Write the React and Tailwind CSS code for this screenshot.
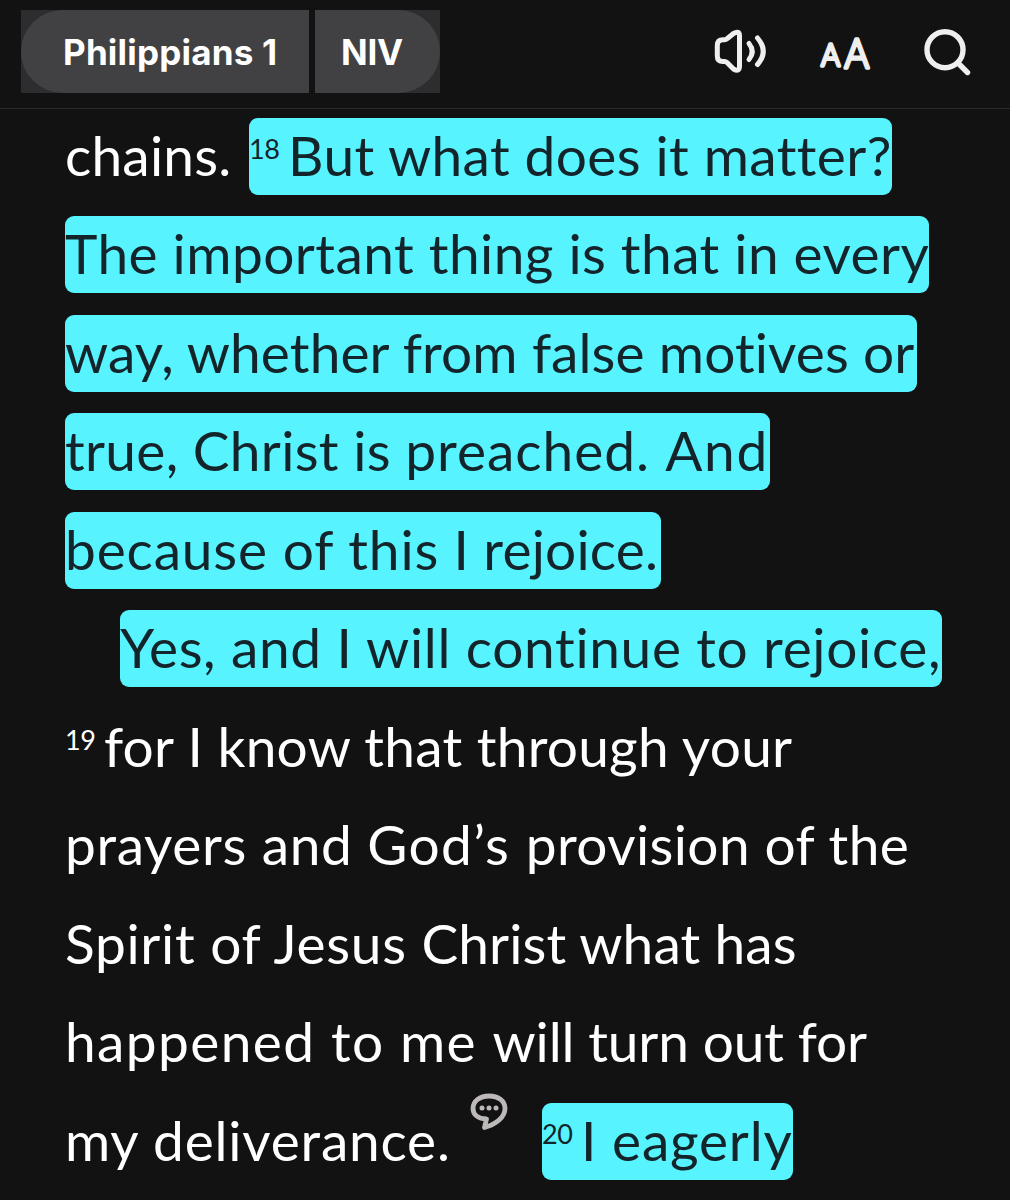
function SpeakerIcon() {
  return (
    <svg width="56" height="48" viewBox="0 0 56 48" fill="none" stroke="#efefef" strokeWidth="5" strokeLinecap="round" strokeLinejoin="round">
      <path d="M3.300 17.500Q3.300 11.800 9 11.800H10.500Q12 11.800 13 10.800L19.500 5.500Q25.500 2 25.500 8V38Q25.500 44.500 19.500 41L13 34.500Q12 33.500 10.500 33.500H9Q3.300 33.500 3.300 28Z" />
      <path d="M35 15.500Q41.500 23.500 35 31.500" />
      <path d="M43.500 10Q55 23.500 43.500 36.500" />
    </svg>
  );
}

function TextSizeIcon() {
  return (
    <svg
      width="60"
      height="60"
      viewBox="0 0 60 60"
      className="font-['Lato'] font-light"
      fill="#efefef"
      stroke="#efefef"
      strokeWidth="3.6"
      strokeLinejoin="round"
    >
      <text transform="translate(4.300 43.500) scale(0.920 1)" fontSize="31">A</text>
      <text transform="translate(27.600 46.200) scale(0.900 1)" fontSize="41.500">A</text>
    </svg>
  );
}

function SearchIcon() {
  return (
    <svg width="48" height="48" viewBox="0 0 48 48" fill="none" stroke="#efefef" strokeWidth="5.400" strokeLinecap="round">
      <circle cx="21" cy="21.700" r="18" />
      <path d="M34.500 35.500L43.500 44.500" />
    </svg>
  );
}

function NoteIcon() {
  return (
    <svg width="38" height="38" viewBox="0 0 38 38" fill="none">
      <path
        d="M16.500 26C8 26 3 21.500 3 15.500C3 8 10 3 19 3C28.500 3 35 8 35 15.500C35 24 26 31.500 14.500 34.500Z"
        stroke="#bdb9b9"
        strokeWidth="4.800"
        strokeLinejoin="round"
      />
      <g fill="#bdb9b9">
        <circle cx="12" cy="15" r="2.500" />
        <circle cx="19" cy="15" r="2.500" />
        <circle cx="26" cy="15" r="2.500" />
      </g>
    </svg>
  );
}

function Verse({ n }) {
  return (
    <sup className="relative -top-[17px] mr-[10px] inline-block w-[29px] align-baseline text-[27px] leading-none tracking-[-0.3px]">
      {n}
    </sup>
  );
}

function Line({ className = "", children }) {
  return <div className={`flex h-[98.5px] items-center whitespace-pre ${className}`}>{children}</div>;
}

function Plain({ className = "", children }) {
  return <span className={`block h-[77px] shrink-0 leading-[75px] ${className}`}>{children}</span>;
}

function Highlight({ className = "", children }) {
  return (
    <mark className={`block h-[77px] shrink-0 rounded-[9px] bg-[#57f4ff] leading-[75px] text-[#13242a] ${className}`}>
      {children}
    </mark>
  );
}

export default function App() {
  return (
    <div className="h-[1200px] w-[1010px] overflow-hidden bg-[#121212] text-white">
      <header className="flex h-[109px] items-start justify-between border-b border-[#2a2a2b] pt-[10px] pl-[21px]">
        <div className="flex h-[83px] gap-[6px] font-['Inter'] text-[35px] font-bold leading-[81px]">
          <div className="w-[288px] bg-[#2d2d2f]">
            <button className="h-full w-full rounded-l-[42px] bg-[#414143] pt-[1px] pl-[42px] text-left tracking-[0.2px] whitespace-nowrap">
              Philippians 1
            </button>
          </div>
          <div className="w-[125px] bg-[#2d2d2f]">
            <button className="h-full w-full rounded-r-[42px] bg-[#414143] pt-[1px] pl-[26px] text-left tracking-[-0.2px]">NIV</button>
          </div>
        </div>
        <div className="flex h-[84px] items-center pr-[38px]">
          <SpeakerIcon />
          <div className="ml-[47px]">
            <TextSizeIcon />
          </div>
          <div className="ml-[47px]">
            <SearchIcon />
          </div>
        </div>
      </header>

      <main className="-mt-[2px] pl-[65px] font-['Lato'] text-[55px]">
        <Line>
          <Plain className="w-[184px] tracking-[0.2px]">chains.</Plain>
          <Highlight className="w-[643px] tracking-[0.4px]"><Verse n="18" />But what does it matter?</Highlight>
        </Line>
        <Line>
          <Highlight className="w-[864px] tracking-[0.45px]">The important thing is that in every</Highlight>
        </Line>
        <Line>
          <Highlight className="w-[852px] tracking-[0.1px]">way, whether from false motives or</Highlight>
        </Line>
        <Line>
          <Highlight className="w-[705px] tracking-[1px]">
            <span className="tracking-[0.3px]">true, Christ is </span>preached. <span className="tracking-[1.800px]">And</span>
          </Highlight>
        </Line>
        <Line>
          <Highlight className="w-[596px] tracking-[0.65px]">
            <span className="tracking-[0.850px]">because of this</span><span className="tracking-[0.2px]"> I rejoice.</span>
          </Highlight>
        </Line>
        <Line className="pl-[55px]">
          <Highlight className="w-[822px] tracking-[0.65px]">Yes, and I will continue to rejoice,</Highlight>
        </Line>
        <Line>
          <Plain className="tracking-[0.25px]"><Verse n="19" />for I know that through your</Plain>
        </Line>
        <Line>
          <Plain className="tracking-[0.65px]">
            prayers and <span className="tracking-[1.400px]">God’s </span><span className="tracking-[0.4px]">provision of the</span>
          </Plain>
        </Line>
        <Line>
          <Plain className="tracking-[0.7px]">Spirit of Jesus <span className="tracking-[0.1px]">Christ what has</span></Plain>
        </Line>
        <Line>
          <Plain className="tracking-[-0.15px]"><span className="tracking-[1.400px]">happened to me </span>will turn out for</Plain>
        </Line>
        <Line>
          <Plain className="w-[405px] tracking-[0.8px]">my deliverance.</Plain>
          <span className="mb-[58px] w-[72px]"><NoteIcon /></span>
          <Highlight className="w-[251px] tracking-[0.8px]"><Verse n="20" />I eagerly</Highlight>
        </Line>
      </main>
    </div>
  );
}
